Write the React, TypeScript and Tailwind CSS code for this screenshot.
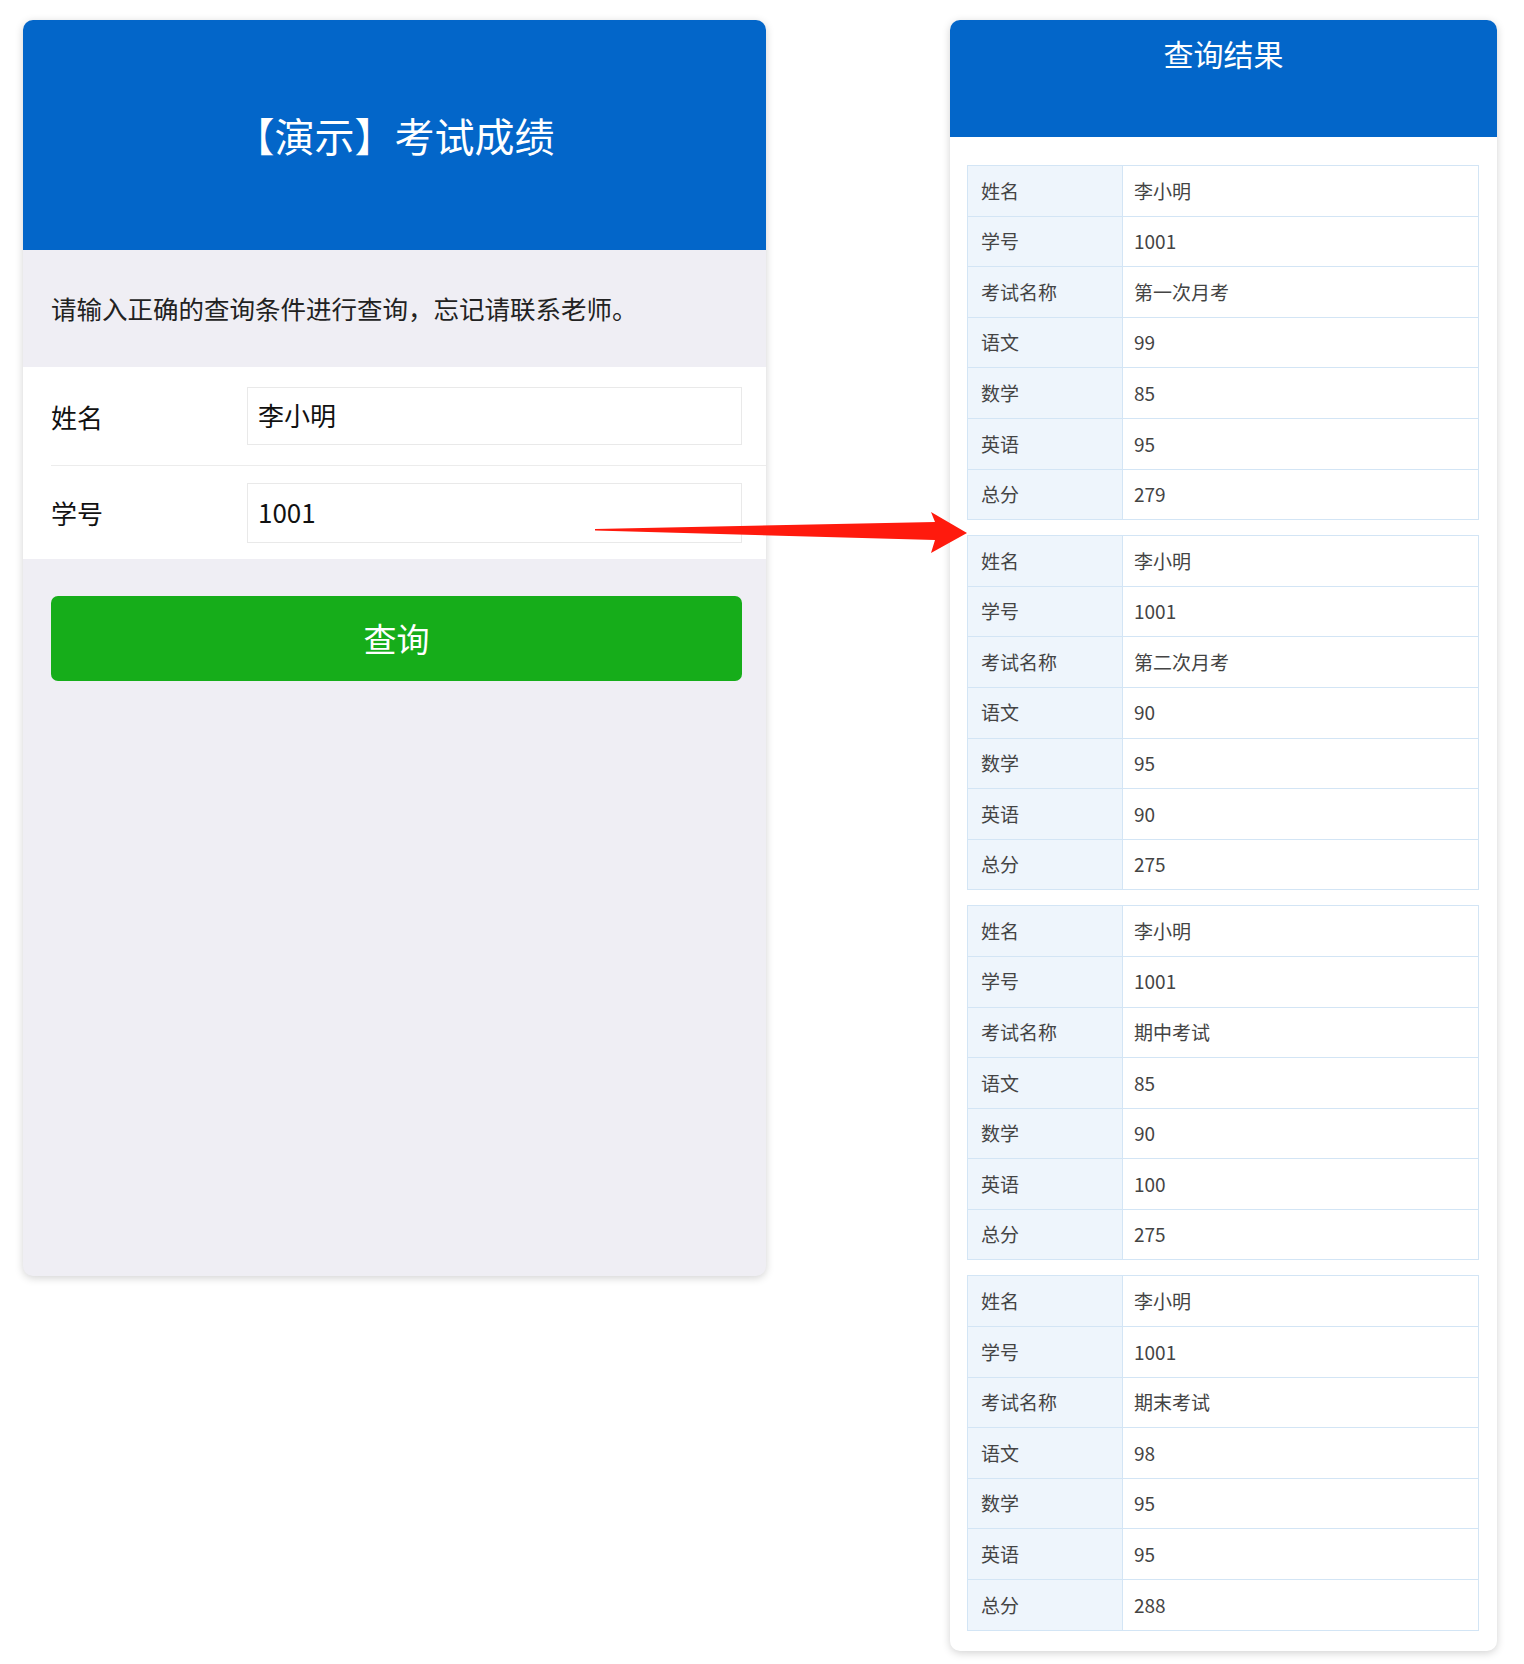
import React from 'react';

type ExamResult = {
  name: string;
  studentNo: string;
  exam: string;
  chinese: number;
  math: number;
  english: number;
  total: number;
};

const RESULTS: ExamResult[] = [
  { name: '李小明', studentNo: '1001', exam: '第一次月考', chinese: 99, math: 85, english: 95, total: 279 },
  { name: '李小明', studentNo: '1001', exam: '第二次月考', chinese: 90, math: 95, english: 90, total: 275 },
  { name: '李小明', studentNo: '1001', exam: '期中考试', chinese: 85, math: 90, english: 100, total: 275 },
  { name: '李小明', studentNo: '1001', exam: '期末考试', chinese: 98, math: 95, english: 95, total: 288 },
];

const FONT = "font-['PingFang_SC','Noto_Sans_CJK_SC','Noto_Sans',sans-serif]";

const ResultTable: React.FC<{ result: ExamResult }> = ({ result }) => {
  const rows: [string, string | number][] = [
    ['姓名', result.name],
    ['学号', result.studentNo],
    ['考试名称', result.exam],
    ['语文', result.chinese],
    ['数学', result.math],
    ['英语', result.english],
    ['总分', result.total],
  ];

  return (
    <table className="w-full border-collapse text-[19px] text-[#444]">
      <tbody>
        {rows.map(([label, value]) => (
          <tr key={label} className="h-[50.6px]">
            <td className="w-[155px] border border-[#d3e5f5] bg-[#eef5fc] py-0 pl-[13px]">{label}</td>
            <td className="border border-[#d3e5f5] bg-white py-0 pl-[11px]">{value}</td>
          </tr>
        ))}
      </tbody>
    </table>
  );
};

export default function App() {
  return (
    <div className={`relative min-h-[1664px] bg-white ${FONT}`}>
      <div className="flex items-start gap-[184px] pl-[23px] pt-[20px]">
        {/* Query form card */}
        <div className="flex h-[1256px] w-[743px] flex-col overflow-hidden rounded-[10px] bg-[#efeef4] shadow-[0_2px_8px_rgba(0,0,0,0.18)]">
          <div className="flex h-[230px] items-center justify-center bg-[#0366c9]">
            <h1 className="text-[40px] leading-none text-white">【演示】考试成绩</h1>
          </div>

          <div className="flex h-[117px] items-center px-[28px]">
            <p className="text-[25.5px] text-[#222]">请输入正确的查询条件进行查询，忘记请联系老师。</p>
          </div>

          <div className="bg-white">
            <div className="flex h-[98px] items-center pl-[28px] pr-[24px]">
              <span className="w-[196px] text-[26px] text-[#111]">姓名</span>
              <div className="flex h-[58px] flex-1 items-center border border-[#e9e9e9] px-[10px] pb-[4px] text-[26px] text-[#111]">
                李小明
              </div>
            </div>
            <div className="ml-[28px] h-px bg-[#ececec]" />
            <div className="flex h-[93px] items-center pl-[28px] pr-[24px]">
              <span className="w-[196px] text-[26px] text-[#111]">学号</span>
              <div className="flex h-[60px] flex-1 items-center border border-[#e9e9e9] px-[10px] pb-[2px] text-[26px] text-[#111]">
                1001
              </div>
            </div>
          </div>

          <div className="px-[28px] pr-[24px] pt-[37px]">
            <button
              type="button"
              className="flex h-[85px] w-full items-center justify-center rounded-[7px] bg-[#16ad1a] text-[33px] text-white"
            >
              查询
            </button>
          </div>
        </div>

        {/* Results card */}
        <div className="w-[547px] overflow-hidden rounded-[10px] bg-white shadow-[0_2px_8px_rgba(0,0,0,0.18)]">
          <div className="h-[117px] bg-[#0366c9] pt-[13px] text-center">
            <h2 className="text-[30px] leading-[40px] text-white">查询结果</h2>
          </div>
          <div className="flex flex-col gap-[15px] pb-[20px] pl-[17px] pr-[18px] pt-[28px]">
            {RESULTS.map((result, i) => (
              <ResultTable key={i} result={result} />
            ))}
          </div>
        </div>
      </div>

      {/* Red pointer arrow */}
      <svg
        className="pointer-events-none absolute left-[590px] top-[505px]"
        width="385"
        height="55"
        viewBox="0 0 385 55"
      >
        <polygon
          points="5,24 345,17 341,7 377,28 341,48 345,35 5,25.5"
          fill="#ff1a0d"
        />
      </svg>
    </div>
  );
}
